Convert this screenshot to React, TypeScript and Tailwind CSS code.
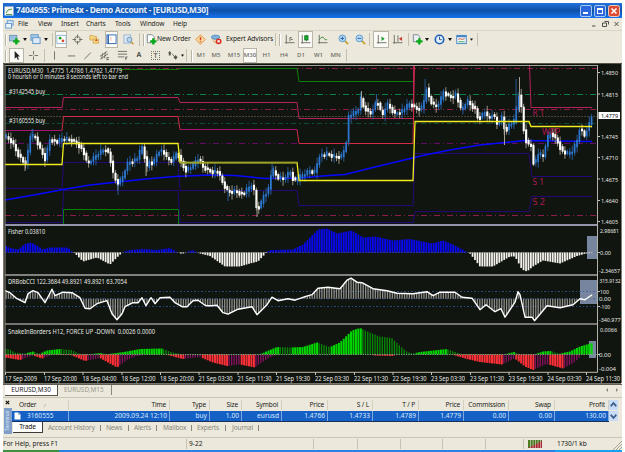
import type { ReactNode } from 'react';

type Point = [number, number];

const BAR_STEP = 2.43;
const FIRST_BAR = 6;
const LAST_BAR = 592;

// ---- price data -------------------------------------------------------

const price: Point[] = [
  [6, 137], [12, 142], [17, 153], [25, 164], [28, 151], [30, 136], [35, 137], [40, 149], [45, 159], [50, 139],
  [57, 142], [63, 139], [72, 140], [78, 144], [83, 151], [87, 164], [93, 159], [100, 152], [106, 149], [109, 154],
  [113, 174], [117, 184], [122, 179], [127, 164], [132, 161], [137, 159], [142, 147], [147, 167], [150, 161], [153, 164],
  [158, 151], [163, 151], [167, 159], [172, 161], [177, 152], [182, 164], [185, 170], [192, 167], [197, 159], [200, 161],
  [203, 167], [210, 171], [218, 172], [223, 184], [228, 192], [235, 191], [243, 194], [248, 189], [253, 184], [256, 207],
  [260, 207], [263, 196], [268, 191], [272, 169], [277, 177], [283, 179], [290, 172], [294, 181], [300, 177], [310, 171],
  [315, 172], [319, 156], [327, 154], [335, 157], [342, 156], [346, 144], [348, 117], [353, 114], [358, 111], [361, 98],
  [363, 106], [370, 114], [377, 101], [382, 116], [387, 104], [395, 114], [402, 111], [410, 104], [417, 109], [423, 107],
  [426, 87], [430, 101], [435, 107], [440, 102], [443, 92], [450, 97], [456, 94], [461, 111], [467, 101], [475, 109],
  [478, 119], [485, 112], [488, 119], [493, 114], [497, 124], [502, 117], [505, 132], [508, 126], [515, 121], [518, 92],
  [521, 106], [524, 134], [527, 144], [532, 146], [534, 170], [537, 154], [543, 156], [547, 139], [551, 132], [557, 141],
  [562, 151], [567, 154], [572, 152], [577, 141], [580, 127], [584, 136], [588, 127], [592, 116],
];

const wicks: { x: number; top: number; bottom: number; up: boolean }[] = [
  { x: 25, top: 160, bottom: 171, up: false },
  { x: 32, top: 129, bottom: 140, up: true },
  { x: 118, top: 184, bottom: 195, up: true },
  { x: 146, top: 160, bottom: 176, up: false },
  { x: 228, top: 190, bottom: 201, up: true },
  { x: 257, top: 200, bottom: 217, up: false },
  { x: 272, top: 162, bottom: 175, up: true },
  { x: 361.5, top: 91, bottom: 108, up: false },
  { x: 376.5, top: 94, bottom: 106, up: true },
  { x: 425, top: 79, bottom: 100, up: true },
  { x: 504.5, top: 120, bottom: 145, up: false },
  { x: 516, top: 79, bottom: 115, up: true },
  { x: 519.5, top: 77, bottom: 112, up: false },
];

// ---- indicator data: height above (+) or below (-) the zero line ------

const fisher: Point[] = [
  [5, 7], [10, 4.5], [18, 3], [25, 8.5], [31, 10], [37, 7], [43, 3], [50, 5], [68, 5], [72, 1],
  [75, -1], [83, -9], [97, -5], [110, -12], [118, -4], [123, 0.5], [130, 2.5], [143, 3.5], [157, 2.5], [170, 4.5],
  [177, 0.5], [182, -1.5], [192, 2.5], [200, -1], [210, -3.5], [225, -14], [240, -14], [250, -11], [258, -9], [267, 0.5],
  [270, 2.5], [293, 3], [303, 8], [318, 23], [327, 24], [337, 19], [352, 22], [363, 15], [375, 16], [393, 12],
  [410, 13.5], [420, 11.5], [432, 9], [443, 12], [453, 8], [465, 1.5], [470, -1], [480, -14], [493, -14], [510, -4],
  [515, -4], [522, -17], [527, -19], [533, -14], [543, -8], [560, -11], [577, -3.5], [586, -1], [592, -0.5],
];

const cci: Point[] = [
  [5, 8], [10, 6], [17, 0], [25, -4], [28, 5], [33, 8], [38, 6], [45, -4], [52, 9.5], [55, 3],
  [63, 6.5], [72, 6], [80, 1], [85, -9.5], [90, -10], [97, -5], [107, -2], [112, -15], [117, -21], [122, -15],
  [125, -8], [133, -4], [138, -4], [142, 1], [146, -7], [151, 1], [155, -5], [160, 1], [170, 1.5], [175, -4],
  [182, -8], [187, -8], [193, -2], [198, -1.5], [205, -6.5], [207, -7], [212, -7], [217, -6.5], [223, -14], [228, -15.5],
  [238, -10.5], [252, -8], [257, -16], [267, -6], [272, 1.5], [278, -2], [288, 0], [295, -1.5], [305, 2], [312, 4],
  [318, 10.5], [328, 11.5], [340, 10], [347, 18.5], [351, 20.5], [357, 16.5], [362, 16], [373, 10], [387, 8], [397, 5.5],
  [413, 5], [427, 7], [433, 3], [440, 6.5], [455, 6.5], [462, 1.5], [472, 0.5], [480, -11], [486, -6], [495, -13],
  [501, -10], [505, -18.5], [515, -3.5], [518, 7], [520, 4], [525, -18.5], [532, -18.5], [534.5, -22], [547, -7], [560, -9],
  [573, -6], [580, 0], [585, -1], [592, 4],
];

const snakeUp: Point[] = [
  [5, 6], [10, 5], [15, 2], [25, 1], [33, 3], [40, 1], [47, 4], [60, 5.5], [72, 4.5], [80, 0.5],
  [92, 0.5], [100, 1.5], [108, 0.5], [113, 1], [127, 3], [140, 5.5], [162, 6], [173, 2], [183, 0.3], [260, 0.3],
  [277, 7.5], [290, 7], [303, 7.5], [317, 12], [330, 7.5], [340, 12], [352, 24], [360, 26.5], [370, 22], [380, 18],
  [392, 16.5], [400, 9], [407, 3], [413, 1], [420, 2.5], [447, 5.5], [460, 1], [465, 0.3], [505, 0.3], [514, 2.5],
  [520, 0.3], [535, 0.3], [543, 3], [550, 3.5], [560, 1], [570, 3], [580, 8], [592, 11.5],
];

const snakeDown: Point[] = [
  [5, 3], [20, 5.5], [33, 1], [42, 4], [53, 0.3], [71, 0.5], [85, 6.5], [100, 3.5], [117, 13], [128, 5],
  [137, 1.5], [147, 0], [166, 0], [183, 4.5], [200, 2.5], [213, 8], [227, 11.5], [240, 10], [255, 13], [265, 6],
  [273, 1.5], [280, 0], [370, 0], [375, 1], [393, 1.5], [400, 0], [452, 0], [467, 4.5], [480, 7.5], [502, 10],
  [515, 4], [525, 12], [533, 15.5], [547, 9.5], [563, 14], [573, 9], [578, 5], [582, 0], [592, 0],
];

function valueAt(points: Point[], x: number) {
  for (let i = 1; i < points.length; i++) {
    const [x0, y0] = points[i - 1];
    const [x1, y1] = points[i];
    if (x <= x1) return y0 + ((y1 - y0) * (x - x0)) / (x1 - x0);
  }
  return points[points.length - 1][1];
}

const bars: number[] = [];
for (let x = FIRST_BAR; x <= LAST_BAR; x += BAR_STEP) bars.push(x);

const toLine = (points: Point[]) => points.map((p) => p.join(',')).join(' ');

// ---- chart ------------------------------------------------------------

function Candles() {
  return (
    <g>
      {bars.map((x, i) => {
        const jitter = ((i * 37) % 11) / 11 - 0.5;
        const open = valueAt(price, Math.max(FIRST_BAR, x - BAR_STEP));
        const close = valueAt(price, x) + jitter * 4;
        const up = close < open - 0.3;
        const top = Math.min(open, close) - 0.8;
        const height = Math.max(2.5, Math.abs(close - open) + 2);
        const tail = 1.5 + ((i * 17) % 7) * 0.7;
        return (
          <g key={i}>
            <rect x={x - 0.4} y={top - tail} width={0.9} height={height + tail * 2} fill={up ? '#2a61a4' : '#a8a294'} />
            <rect x={x - 0.9} y={top} width={up ? 1.7 : 2.1} height={height} fill={up ? '#2c78d2' : '#ffffff'} />
          </g>
        );
      })}
      {wicks.map((w) => (
        <rect key={w.x} x={w.x - 0.4} y={w.top} width={0.9} height={w.bottom - w.top} fill={w.up ? '#2a61a4' : '#b8b2a4'} />
      ))}
    </g>
  );
}

function Levels() {
  return (
    <g fill="none" strokeWidth={1}>
      <path d="M124 68.5H597M5 109.5H597M5 215.5H597" stroke="#8c1c4c" strokeDasharray="6 3 1 3" />
      <path d="M5 94.5H597" stroke="#078048" strokeDasharray="6 3 1 3" />
      <path d="M5 116.5H597" stroke="#4c4434" strokeDasharray="2 1" />
      <path d="M5 123.5H597" stroke="#0b4c3c" strokeDasharray="5 3 2 3" />
      <path d="M5 143.5H597" stroke="#650a65" strokeDasharray="6 3 1 3" />
      <path d="M5 188.5H62L63.5 162.5H178L180 190.5H297L299 205.5H413L415 153.5H529L532 176.5H592" stroke="#240878" />
      <path d="M5 222.5H62L63.5 190.5H178L180 222.5H413L415 211.5H529L532 196.5H592" stroke="#240878" />
      <path d="M63.5 224V209.5H178.5V224M120 69.5H179L180 68.5H297L299 81.5H413.5V65" stroke="#068006" />
      <path d="M5 107.5H62L63.5 97.5H178L180 102.5H297L299 118.5H413.5V65M529.5 65L531 107.5H592" stroke="#b3225b" />
      <path d="M5 130.5H62L63.5 116.5H178L180 129.5H297L299 143.5H413L414.5 65" stroke="#d12b46" />
      <path d="M180 129.5H297M5 130.5H62" stroke="#a81474" />
      <polyline
        points="5,200 34,195 63,189.5 90,185 118,182 146,179 175,176.5 210,175 235,175.5 265,178.5 300,178 322,176 345,174.5 375,167 400,161 425,155 450,150 480,145 500,143 525,140.5 592,141.5"
        stroke="#0808ff"
        strokeWidth={1.5}
      />
    </g>
  );
}

type HistogramProps = { points: Point[]; zero: number; width: number; posColor: string; negColor: string };

function Histogram({ points, zero, width, posColor, negColor }: HistogramProps) {
  return (
    <g>
      {bars.map((x, i) => {
        const v = valueAt(points, x);
        return (
          <rect key={i} x={x - width / 2} y={v > 0 ? zero - v : zero} width={width} height={Math.abs(v)} fill={v > 0 ? posColor : negColor} />
        );
      })}
    </g>
  );
}

function Snake() {
  const zero = 354.5;
  return (
    <g>
      {bars.map((x, i) => {
        const up = valueAt(snakeUp, x);
        const down = valueAt(snakeDown, x);
        const upGrows = up >= valueAt(snakeUp, Math.max(5, x - BAR_STEP));
        const downGrows = down >= valueAt(snakeDown, Math.max(5, x - BAR_STEP));
        return (
          <g key={i}>
            <rect x={x - 1} y={zero - up} width={upGrows ? 2 : 1.3} height={up} fill={upGrows ? '#00d800' : '#078a07'} />
            <rect x={x - 1} y={zero} width={downGrows ? 2 : 1.3} height={down} fill={downGrows ? '#ff3038' : '#8a1060'} />
          </g>
        );
      })}
      <path d="M5 354.5H597" stroke="#8fae90" strokeWidth={0.8} strokeDasharray="1.4 1" />
    </g>
  );
}

type ChartText = { x: number; y: number; w: number; text: string };

const chartTexts: ChartText[] = [
  { x: 8, y: 72.6, w: 114, text: 'EURUSD,M30  1.4775 1.4786 1.4762 1.4779' },
  { x: 8, y: 79.2, w: 120, text: '0 hourish or 0 minutes 8 seconds left to bar end' },
  { x: 9, y: 93.5, w: 36, text: '#3142545 buy' },
  { x: 9, y: 123, w: 36, text: '#3160555 buy' },
  { x: 8, y: 234.3, w: 37, text: 'Fisher 0.03810' },
  { x: 8, y: 284.3, w: 119, text: 'DRBobCCI 122.3684 49.8921 49.8921 63.7054' },
  { x: 8, y: 333.7, w: 147, text: 'SnakeInBorders H12, FORCE UP -DOWN  0.0026 0.0000' },
];

const scaleTexts: ChartText[] = [
  { x: 601, y: 75, w: 17, text: '1.4850' },
  { x: 601, y: 96.5, w: 17, text: '1.4815' },
  { x: 601, y: 139, w: 17, text: '1.4745' },
  { x: 601, y: 160, w: 17, text: '1.4710' },
  { x: 601, y: 181.5, w: 17, text: '1.4675' },
  { x: 601, y: 203, w: 17, text: '1.4640' },
  { x: 601, y: 223.5, w: 17, text: '1.4605' },
  { x: 600, y: 232.5, w: 19, text: '2.98681' },
  { x: 600, y: 255, w: 11, text: '0.00' },
  { x: 599, y: 272.5, w: 21, text: '-2.34657' },
  { x: 599.5, y: 282.5, w: 21, text: '315.9132' },
  { x: 600, y: 293.7, w: 9, text: '100' },
  { x: 599, y: 301.3, w: 12, text: '0.00' },
  { x: 600, y: 309, w: 10, text: '-100' },
  { x: 599, y: 322, w: 21.5, text: '-340.977' },
  { x: 600, y: 332, w: 17, text: '0.0066' },
  { x: 599, y: 357, w: 12, text: '0.00' },
  { x: 599, y: 370.5, w: 17, text: '-0.004' },
];

const timeTexts: ChartText[] = [
  { x: 5, y: 380.5, w: 32, text: '17 Sep 2009' },
  { x: 44, y: 380.5, w: 33, text: '17 Sep 20:00' },
  { x: 82.5, y: 380.5, w: 34, text: '18 Sep 04:00' },
  { x: 121.5, y: 380.5, w: 34, text: '18 Sep 12:00' },
  { x: 160, y: 380.5, w: 34, text: '18 Sep 20:00' },
  { x: 198.5, y: 380.5, w: 34, text: '21 Sep 03:30' },
  { x: 237.5, y: 380.5, w: 34, text: '21 Sep 11:30' },
  { x: 276, y: 380.5, w: 34, text: '21 Sep 19:30' },
  { x: 315, y: 380.5, w: 34, text: '22 Sep 03:30' },
  { x: 354, y: 380.5, w: 34, text: '22 Sep 11:30' },
  { x: 392.5, y: 380.5, w: 34, text: '22 Sep 19:30' },
  { x: 431, y: 380.5, w: 34, text: '23 Sep 03:30' },
  { x: 470, y: 380.5, w: 34, text: '23 Sep 11:30' },
  { x: 508.5, y: 380.5, w: 34, text: '23 Sep 19:30' },
  { x: 547.5, y: 380.5, w: 34, text: '24 Sep 03:30' },
  { x: 586, y: 380.5, w: 34, text: '24 Sep 11:30' },
];

function Texts({ items, size }: { items: ChartText[]; size: number }) {
  return (
    <g fill="#e8e8e4" fontSize={size}>
      {items.map((t) => (
        <text key={t.text + t.x + t.y} className="whitespace-pre" x={t.x} y={t.y} textLength={t.w} lengthAdjust="spacingAndGlyphs">
          {t.text}
        </text>
      ))}
    </g>
  );
}

function Chart() {
  return (
    <svg viewBox="3 64 619 320" className="block h-[320px] w-[619px] overflow-visible font-['Noto_Sans','Open_Sans',sans-serif]">
      <rect x={3} y={64} width={618} height={320} fill="#77756b" />
      <rect x={4.5} y={64} width={617} height={319} fill="#101510" />
      <svg x={5} y={65} width={592} height={160} viewBox="5 65 592 160">
        <Levels />
        <Candles />
        <polyline
          points="5,164.5 62,164.5 63.5,143.5 178,143.5 180,162.5 297,162.5 299,180.5 413,180.5 415,121.5 529,121.5 531,126.5 592,126.5"
          fill="none"
          stroke="#f0ec20"
          strokeWidth={1.3}
        />
        <path d="M180 162.8H297" stroke="#97a12b" strokeWidth={1.6} />
      </svg>

      <g fill="#b01850" fontSize={8.4}>
        <text x={532.5} y={115.5} textLength={12} lengthAdjust="spacingAndGlyphs">R 1</text>
        <text x={542} y={134.5} textLength={18} lengthAdjust="spacingAndGlyphs">WPP</text>
        <text x={532.5} y={185} textLength={11.5} lengthAdjust="spacingAndGlyphs">S 1</text>
        <text x={532.5} y={204.5} textLength={12.5} lengthAdjust="spacingAndGlyphs">S 2</text>
      </g>

      {/* last bars highlight */}
      <path d="M587 236H597V259H587ZM580 280H597V304H580ZM589 341H596V358H589Z" fill="#77859f" />

      <path d="M5 252.5H597" stroke="#686868" strokeWidth={0.7} strokeDasharray="2 1" />
      <Histogram points={fisher} zero={252.5} width={1.8} posColor="#0808f0" negColor="#f4f1ea" />

      <path d="M5 291.5H597M5 306.5H597M5 298.7H597" stroke="#3459a0" strokeWidth={0.8} strokeDasharray="2 2 1 2" />
      <Histogram points={cci} zero={298.7} width={1.3} posColor="#8d8d88" negColor="#8d8d88" />
      <polyline points={toLine(cci.map(([x, v]) => [x, 298.7 - v]))} fill="none" stroke="#ffffff" strokeWidth={1.4} strokeLinejoin="round" />
      <Snake />

      {/* pane frames */}
      <path d="M5 65.5H597.5" stroke="#a3a197" />
      <path d="M5 225H597.5" stroke="#9494ac" strokeWidth={2} />
      <path d="M5 275H597.5" stroke="#a5a4a4" strokeWidth={1.7} />
      <path d="M5 324H597.5" stroke="#747474" strokeWidth={2.2} />
      <path d="M5 372.3H597.5" stroke="#c2bba8" />
      <path d="M597.5 65V372.5" stroke="#b5b3aa" />
      <path d="M5.3 65V372.5" stroke="#8b887c" strokeWidth={0.7} />
      <path
        d="M598 72.5h2M598 94h2M598 136.5h2M598 157.5h2M598 179h2M598 200.5h2M598 221.5h2M598 252.5h2M598 291.5h2M598 306.5h2M598 354.5h2"
        stroke="#c4c2b8"
      />
      {timeTexts.map((t) => (
        <path key={t.x} d={`M${t.x + 0.5} 372V375`} stroke="#c4c2b8" />
      ))}

      <Texts items={chartTexts} size={6.3} />
      <Texts items={scaleTexts} size={5.8} />
      <Texts items={timeTexts} size={6.3} />
      <rect x={598.5} y={112} width={21.5} height={7} fill="#ffffff" />
      <text x={601} y={117.8} fontSize={6} fill="#101010" textLength={17} lengthAdjust="spacingAndGlyphs">1.4779</text>
    </svg>
  );
}

// ---- toolbars ---------------------------------------------------------

function Cell({ w, pressed, children }: { w: string; pressed?: boolean; children?: ReactNode }) {
  const look = pressed ? 'border border-[#b9b6a8] bg-[#fbfaf6]' : '';
  return <div className={`flex h-full shrink-0 items-center justify-center ${w} ${look}`}>{children}</div>;
}

function Glyph({ children }: { children: ReactNode }) {
  return (
    <svg viewBox="0 0 12 12" className="block size-[11px] shrink-0" fill="none" stroke="#6a6a64">
      {children}
    </svg>
  );
}

const Sep = ({ w }: { w: string }) => (
  <Cell w={w}>
    <div className="h-[13px] w-px bg-[#c3c0b0]" />
  </Cell>
);

const Grip = () => (
  <Cell w="w-[6px]">
    <div className="h-[12px] w-[2px] border-l border-[#b7b4a6] bg-white" />
  </Cell>
);

const Drop = ({ w }: { w: string }) => (
  <Cell w={w}>
    <svg viewBox="0 0 4 3" className="block h-[3px] w-[4px]" fill="#111">
      <path d="M0 0H4L2 3Z" />
    </svg>
  </Cell>
);

const plus = <path d="M8 4.5V11.5M4.5 8H11.5" stroke="#08a818" strokeWidth={2.6} />;

function MainToolbar() {
  return (
    <div className="flex h-[17px] items-center">
      <Grip />
      <Cell w="w-[11px]"><Glyph><rect x={0.5} y={1.5} width={8} height={6} fill="#9cc0dc" stroke="#6d97b8" />{plus}</Glyph></Cell>
      <Drop w="w-[9px]" />
      <Cell w="w-[13px]"><Glyph><rect x={1} y={0.8} width={8} height={6} fill="#a9ccea" stroke="#5f93c4" /><rect x={3} y={4} width={8} height={6.5} fill="#dcebf7" stroke="#5f93c4" /></Glyph></Cell>
      <Drop w="w-[7px]" />
      <Sep w="w-[6px]" />
      <Cell w="w-[12px]" pressed><Glyph><rect x={1} y={1.5} width={10} height={9} fill="#fff" stroke="#8cb4d4" /><circle cx={4.5} cy={4.5} r={1.5} fill="#18a028" stroke="none" /><circle cx={7.6} cy={7.4} r={1.5} fill="#d84828" stroke="none" /></Glyph></Cell>
      <Cell w="w-[21px]"><Glyph><circle cx={6} cy={6} r={3.2} /><path d="M6 0.5V4.5M6 7.5V11.5M0.5 6H4.5M7.5 6H11.5" /></Glyph></Cell>
      <Cell w="w-[13px]"><Glyph><path d="M1 1.5H4L5 2.5H8V6.5H1Z" fill="#f5d77b" stroke="#d8a85c" /><path d="M4.5 5.5H10.5V10H4.5Z" fill="#f5d77b" stroke="#d8a85c" /><path d="M6.5 7.5h3l-1.5-2.2Z" fill="#d84828" stroke="none" /></Glyph></Cell>
      <Cell w="w-[4px]" />
      <Cell w="w-[13px]" pressed><Glyph><rect x={1} y={1} width={10} height={9.5} fill="#fff" stroke="#2864b0" /><path d="M2.5 1V10.5" stroke="#2864b0" strokeWidth={1.5} /><path d="M4.5 4.5H6M4.5 6.5H6" stroke="#e39c88" /></Glyph></Cell>
      <Cell w="w-[20px]"><Glyph><rect x={1} y={1} width={7.5} height={9} fill="#dce9f5" stroke="#9ab6d0" /><circle cx={7} cy={6.2} r={2.7} fill="#b8d6ee" stroke="#6d91b4" /><path d="M9 8.4L11.5 11.2" stroke="#c39a3c" strokeWidth={1.6} /></Glyph></Cell>
      <Sep w="w-[3px]" />
      <Grip />
      <Cell w="w-[8px]"><Glyph><path d="M1.5 0.8H6.5L9 3V9.5H1.5Z" fill="#fff" stroke="#7b8794" />{plus}</Glyph></Cell>
      <div className="w-[38px] shrink-0 pl-[2px] text-[6.8px] tracking-[-0.12px]">New Order</div>
      <Cell w="w-[15px]"><Glyph><path d="M6 0.8L11.2 6L6 11.2L0.8 6Z" fill="#fbd9a0" stroke="#e09048" /><path d="M6 3.3V6.8M6 7.8V9" stroke="#d84828" strokeWidth={1.6} /></Glyph></Cell>
      <Cell w="w-[17px]"><Glyph><ellipse cx={5} cy={3.5} rx={4.5} ry={2.2} fill="#7fb2dc" stroke="#4d88bc" /><path d="M2 5.5Q3 10 6 10" fill="#f0cf98" stroke="#d8a860" /><circle cx={8.3} cy={8} r={3.2} fill="#dc3020" stroke="none" /><rect x={7} y={6.8} width={2.6} height={2.4} fill="#fff" stroke="none" /></Glyph></Cell>
      <div className="w-[49px] shrink-0 pl-px text-[6.7px] tracking-[-0.12px]">Expert Advisors</div>
      <Sep w="w-[3px]" />
      <Grip />
      <Cell w="w-[12px]"><Glyph><path d="M2.5 1V10.5M1 9.5H11.5M6.5 3.5V8M6.5 4H8.5M9.5 6H7.5" /></Glyph></Cell>
      <Cell w="w-[3px]" />
      <Cell w="w-[15px]" pressed><Glyph><path d="M2.5 1V10.5M1 9.5H11.5M7 1V8" /><rect x={5.2} y={2} width={3.5} height={4.5} fill="#18b030" stroke="#087818" /></Glyph></Cell>
      <Cell w="w-[19px]"><Glyph><path d="M2.5 1V10.5M1 9.5H11.5" /><path d="M2.5 6Q6 1.5 7.5 4.5T11 6" stroke="#3a8a3a" /></Glyph></Cell>
      <Cell w="w-[22px]"><Glyph><path d="M7.5 7.5L11 11" stroke="#c9a030" strokeWidth={2} /><circle cx={4.8} cy={4.8} r={3.7} fill="#b7dbf5" stroke="#5a98cc" /><path d="M2.8 4.8H6.8M4.8 2.8V6.8" stroke="#2058a8" /></Glyph></Cell>
      <Cell w="w-[12px]"><Glyph><path d="M7.5 7.5L11 11" stroke="#c9a030" strokeWidth={2} /><circle cx={4.8} cy={4.8} r={3.7} fill="#b7dbf5" stroke="#5a98cc" /><path d="M2.8 4.8H6.8" stroke="#2058a8" /></Glyph></Cell>
      <Sep w="w-[7px]" />
      <Cell w="w-[16px]" pressed><Glyph><path d="M2.5 1V10.5M1 9.5H11.5" /><path d="M6 2.8V7.5L9.5 5.2Z" fill="#18a028" stroke="none" /></Glyph></Cell>
      <Cell w="w-[17px]"><Glyph><path d="M2.5 1V10.5M1 9.5H11.5M6.5 1.5V8.5" /><path d="M11 3V7.5L7.5 5.2Z" fill="#c83828" stroke="none" /></Glyph></Cell>
      <Sep w="w-[5px]" />
      <Cell w="w-[13px]"><Glyph><path d="M1.5 0.8H6.5L8.5 3V8.5H1.5Z" fill="#e8eef2" stroke="#7b8794" />{plus}</Glyph></Cell>
      <Drop w="w-[6px]" />
      <Cell w="w-[18px]"><Glyph><circle cx={6} cy={6} r={4.6} fill="#e4f1fc" stroke="#2060b8" strokeWidth={1.8} /><path d="M6 3V6.2H8.5" stroke="#2c4c78" /></Glyph></Cell>
      <Drop w="w-[4px]" />
      <Cell w="w-[18px]"><Glyph><rect x={0.8} y={1.5} width={10.4} height={9} fill="#eef6fc" stroke="#4484c0" /><path d="M1 2.5H11" stroke="#4484c0" strokeWidth={2} /><path d="M2.5 6L4.5 5L6.5 6L9.5 5" stroke="#c85838" /><path d="M2.5 8.5H9.5" stroke="#48a050" /></Glyph></Cell>
      <Drop w="w-[3px]" />
      <Sep w="w-[8px]" />
    </div>
  );
}

function DrawToolbar() {
  const frames = [
    { name: 'M1', w: 'w-[12px]' },
    { name: 'M5', w: 'w-[18px]' },
    { name: 'M15', w: 'w-[18px]' },
    { name: 'M30', w: 'w-[14px]', on: true },
    { name: 'H1', w: 'w-[19px]' },
    { name: 'H4', w: 'w-[16px]' },
    { name: 'D1', w: 'w-[18px]' },
    { name: 'W1', w: 'w-[17px]' },
    { name: 'MN', w: 'w-[17px]' },
  ];
  return (
    <div className="flex h-[15px] items-center">
      <Grip />
      <Cell w="w-[15px]" pressed><Glyph><path d="M4 1V9.5L6 7.6L7.4 10.8L8.6 10.2L7.3 7.2H9.8Z" fill="#222" stroke="none" /></Glyph></Cell>
      <Cell w="w-[19px]"><Glyph><path d="M6 1V5M6 7V11M1 6H5M7 6H11" /></Glyph></Cell>
      <Sep w="w-[3px]" />
      <Cell w="w-[16px]"><Glyph><path d="M6 1.5V10.5" /></Glyph></Cell>
      <Cell w="w-[18px]"><Glyph><path d="M2 6.5H10" /></Glyph></Cell>
      <Cell w="w-[15px]"><Glyph><path d="M2.5 10L9.5 3" /></Glyph></Cell>
      <Cell w="w-[19px]"><Glyph><path d="M1 7L9 1.5M1.5 10L10 4M4 3.5L3 10M7 2L6 9" /><path d="M8.5 8.3H11M8.5 10.5H11M8.7 8V11" /></Glyph></Cell>
      <Cell w="w-[16px]"><Glyph><path d="M1 1.5H11M1 4.5H11M1 7.5H8" /><path d="M9.5 11V7.5H11.5M9.5 9H11" /></Glyph></Cell>
      <Cell w="w-[18px]"><span className="text-[7px] font-bold text-[#55554f]">A</span></Cell>
      <Cell w="w-[15px]"><span className="grid h-[9px] w-[9px] place-items-center border border-dotted border-[#77756b] text-[7px] leading-none font-semibold text-[#66665f]">T</span></Cell>
      <Cell w="w-[18px]"><Glyph><path d="M1 3.5L3 1L5 3.5H4V6H2V3.5Z" fill="#55554f" stroke="none" /><path d="M5.5 4L8 7" /><path d="M7 8L9.5 5.5L11.5 8L9.5 10.5Z" fill="#55554f" stroke="none" /></Glyph></Cell>
      <Drop w="w-[3px]" />
      <Sep w="w-[5px]" />
      <Grip />
      {frames.map((f) => (
        <Cell key={f.name} w={f.w} pressed={f.on}>
          <span className="text-[6px] font-medium text-[#66665f]">{f.name}</span>
        </Cell>
      ))}
      <Sep w="w-[4px]" />
    </div>
  );
}

// ---- window chrome ----------------------------------------------------

function TitleBar() {
  return (
    <div className="flex h-[15px] items-center bg-linear-to-b from-[#2272dc] via-[#0d52a8] to-[#1672f0] pr-[2px] pl-[1px]">
      <svg viewBox="0 0 10 10" className="block size-[10px]">
        <rect x={0.5} y={0.5} width={9} height={9} fill="#f6f6ee" />
        <path d="M2 7Q3 3 8 3M2 8.5H8" stroke="#4c9850" fill="none" />
      </svg>
      <div className="ml-[2px] w-[260px] text-[8.4px] font-bold tracking-[-0.3px] whitespace-pre text-[#e6eefa]">
        7404955: Prime4x - Demo Account - [EURUSD,M30]
      </div>
      <div className="ml-auto flex gap-[2px]">
        <div className="flex size-[12px] items-end rounded-[2px] border border-[#a8c8f4] bg-[#2a66dc] p-[2px]">
          <div className="h-[2px] w-[5px] bg-white" />
        </div>
        <div className="size-[12px] rounded-[2px] border border-[#a8c8f4] bg-[#2a66dc] p-[2px]">
          <div className="h-[6px] w-[6px] border border-t-2 border-white" />
        </div>
        <svg viewBox="0 0 12 12" className="block size-[12px]">
          <rect x={0.5} y={0.5} width={11} height={11} rx={2} fill="#dc4c30" stroke="#f0c8bc" />
          <path d="M3.5 3.5L8.5 8.5M8.5 3.5L3.5 8.5" stroke="#fff" strokeWidth={1.6} />
        </svg>
      </div>
    </div>
  );
}

function MenuBar() {
  const items = [
    { name: 'File', w: 'w-[20px]' },
    { name: 'View', w: 'w-[23px]' },
    { name: 'Insert', w: 'w-[25px]' },
    { name: 'Charts', w: 'w-[29px]' },
    { name: 'Tools', w: 'w-[25px]' },
    { name: 'Window', w: 'w-[33px]' },
    { name: 'Help', w: 'w-[20px]' },
  ];
  return (
    <div className="flex h-[13px] items-center border-b border-[#d8d5c5] text-[6.6px] tracking-[-0.1px]">
      <svg viewBox="0 0 10 10" className="mr-[4px] ml-[2px] block size-[9px]">
        <rect x={2.5} y={0.8} width={6.5} height={5} fill="#dcebf8" stroke="#5a94cc" />
        <rect x={0.8} y={3.8} width={6.5} height={5.2} fill="#eef6fc" stroke="#5a94cc" />
      </svg>
      {items.map((m) => (
        <span key={m.name} className={m.w}>{m.name}</span>
      ))}
      <svg viewBox="0 0 30 8" className="mr-[2px] ml-auto block h-[8px] w-[30px]" fill="none" stroke="#504e46">
        <path d="M2 6H5.5M14.5 1.5H18.5V4.5M12.5 3H16.5V6.5H12.5ZM24.5 2L28.5 6M28.5 2L24.5 6" />
      </svg>
    </div>
  );
}

function ChartTabs() {
  return (
    <div className="flex h-[13px] items-start border-t border-[#5f5d54] text-[6.4px]">
      <div className="ml-[2px] h-[11px] w-[53px] border-r border-b border-[#55534a] bg-white text-center leading-[10px]">EURUSD,M30</div>
      <div className="w-[54px] border-r border-[#8a887c] pl-[6px] leading-[10px] text-[#99978a]">EURUSD,M15</div>
      <svg viewBox="0 0 16 8" className="mt-[1px] mr-[2px] ml-auto block h-[8px] w-[16px]" fill="#8a887c">
        <path d="M4 2V6L2 4ZM12 2V6L14 4Z" />
      </svg>
    </div>
  );
}

const columns = [
  { name: 'Order', value: '3160555', w: 'w-[57px]' },
  { name: 'Time', value: '2009.09.24 12:10', w: 'w-[101px]' },
  { name: 'Type', value: 'buy', w: 'w-[40px]' },
  { name: 'Size', value: '1.00', w: 'w-[32px]' },
  { name: 'Symbol', value: 'eurusd', w: 'w-[40px]' },
  { name: 'Price', value: '1.4766', w: 'w-[46px]' },
  { name: 'S / L', value: '1.4733', w: 'w-[45px]' },
  { name: 'T / P', value: '1.4789', w: 'w-[46px]' },
  { name: 'Price', value: '1.4779', w: 'w-[45px]' },
  { name: 'Commission', value: '0.00', w: 'w-[45px]' },
  { name: 'Swap', value: '0.00', w: 'w-[46px]' },
  { name: 'Profit', value: '130.00', w: 'w-[54px]' },
];

function Terminal() {
  const tabs = [
    { name: 'Account History', w: 'w-[58px]' },
    { name: 'News', w: 'w-[28px]' },
    { name: 'Alerts', w: 'w-[29px]' },
    { name: 'Mailbox', w: 'w-[34px]' },
    { name: 'Experts', w: 'w-[35px]' },
    { name: 'Journal', w: 'w-[32px]' },
  ];
  return (
    <div className="flex h-[39px] border-t border-[#c9c6b6] pt-px text-[6.6px] tracking-[-0.16px] whitespace-nowrap">
      <div className="flex w-[9px] flex-col items-center">
        <svg viewBox="0 0 6 6" className="mt-[1px] block size-[5px]" stroke="#111" strokeWidth={1.5}>
          <path d="M1 1L5 5M5 1L1 5" />
        </svg>
        <div className="mt-[3px] grid h-[26px] w-[8px] place-items-center overflow-hidden bg-[#7f9fca]">
          <span className="rotate-180 text-[5.2px] leading-none text-[#dce8f6] [writing-mode:vertical-rl]">Terminal</span>
        </div>
      </div>
      <div className="w-[597px]">
        <div className="flex h-[12px] items-center">
          {columns.map((c, i) => (
            <div key={i} className={`flex h-[10px] items-center border-r border-[#d3d0c0] pr-[3px] ${i === 0 ? 'pl-[7px]' : 'justify-end'} ${c.w}`}>
              {c.name}
              {i === 0 && (
                <svg viewBox="0 0 6 6" className="ml-[7px] block size-[5px]" fill="none" stroke="#b5b2a3">
                  <path d="M1 5L3.5 1" />
                </svg>
              )}
            </div>
          ))}
        </div>
        <div className="flex h-[11px] items-center border-b border-[#16325c] bg-[#1560c4] tracking-[0.02px] text-[#d8e8ff]">
          {columns.map((c, i) => (
            <div key={i} className={`flex h-full items-center border-r border-[#7fa8dc] px-[2px] ${i === 0 ? '' : 'justify-end'} ${c.w}`}>
              {i === 0 && (
                <svg viewBox="0 0 7 8" className="mr-[6px] block h-[8px] w-[7px]">
                  <path d="M0.5 0.5H4.5L6.5 2.5V7.5H0.5Z" fill="#fff" />
                  <path d="M4.5 0.5V2.5H6.5" fill="none" stroke="#7c95b8" strokeWidth={0.7} />
                </svg>
              )}
              {c.value}
            </div>
          ))}
        </div>
        <div className="flex h-[12px] items-start text-[#8a887c]">
          <div className="mr-[5px] ml-px h-[11px] w-[30px] border-r border-b border-[#3c3b35] bg-white text-center leading-[10px] text-[#111]">Trade</div>
          {tabs.map((t) => (
            <div key={t.name} className={`flex h-[12px] items-center ${t.w}`}>
              <span>{t.name}</span>
              <span className="mx-auto h-[6px] w-px bg-[#8a887c]" />
            </div>
          ))}
        </div>
      </div>
      <div className="mt-px flex w-[10px] flex-col gap-px">
        {['M1.5 5L4 2.5L6.5 5', 'M1.5 3L4 5.5L6.5 3'].map((d) => (
          <svg key={d} viewBox="0 0 8 8" preserveAspectRatio="none" className="block h-[10px] w-[9px] bg-[#c8dcf8]" fill="none" stroke="#40608c" strokeWidth={1.5}>
            <path d={d} />
          </svg>
        ))}
      </div>
    </div>
  );
}

function StatusBar() {
  return (
    <div className="flex h-[13px] items-center border-t border-[#c9c6b6] text-[6.6px] whitespace-nowrap">
      <div className="w-[183px] tracking-[-0.02px]">For Help, press F1</div>
      <div className="h-[10px] w-[127px] border-l border-[#c6c3b3] pl-[2px] leading-[10px]">9-22</div>
      <div className="h-[10px] w-[44px] border-l border-[#c6c3b3]" />
      <div className="h-[10px] w-[43px] border-l border-[#c6c3b3]" />
      <div className="h-[10px] w-[42px] border-l border-[#c6c3b3]" />
      <div className="h-[10px] w-[43px] border-l border-[#c6c3b3]" />
      <div className="h-[10px] w-[38px] border-l border-[#c6c3b3]" />
      <div className="flex h-[10px] items-center border-l border-[#c6c3b3] pl-[4px]">
        <svg viewBox="0 0 14 8" className="mr-[15px] block h-[8px] w-[14px]">
          <rect width={14} height={8} fill="#4c7c24" />
          <path d="M0 8L14 1V8Z" fill="#a82434" />
          <path d="M2.5 0V8M5 0V8M7.5 0V8M10 0V8M12.5 0V8" stroke="#e8e4d0" strokeWidth={0.6} />
        </svg>
        <span className="tracking-[-0.1px]">1730/1 kb</span>
      </div>
      <svg viewBox="0 0 10 10" className="mt-[2px] ml-auto block size-[10px]" stroke="#a5a292">
        <path d="M1 10L10 1M4 10L10 4M7 10L10 7" />
      </svg>
    </div>
  );
}

export default function App() {
  return (
    <div className="h-[452px] w-[625px] overflow-hidden bg-white pt-[3px] pl-[3px] font-['Noto_Sans','Open_Sans',sans-serif] text-[#1c1c1a]">
      <div className="flex h-[449px] w-[619px] flex-col bg-[#ece9dc]">
        <TitleBar />
        <MenuBar />
        <MainToolbar />
        <DrawToolbar />
        <div className="h-px bg-[#55544c]" />
        <Chart />
        <ChartTabs />
        <Terminal />
        <div className="h-px" />
        <StatusBar />
        <div className="mt-auto flex h-[2px] bg-[#2c80e4]">
          <div className="w-[56px] bg-[#3c9040]" />
          <div className="ml-auto w-[67px] bg-[#18a0ec]" />
        </div>
      </div>
    </div>
  );
}
